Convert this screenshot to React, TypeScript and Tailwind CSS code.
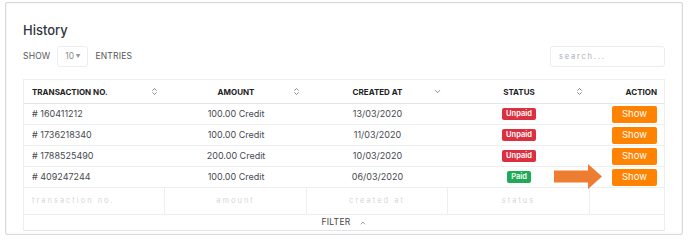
import { ChevronsUpDown, ChevronDown, ChevronUp } from 'lucide-react'

interface Row {
    id: string
    amount: string
    created: string
    paid: boolean
}

const rows: Row[] = [
    { id: '# 160411212', amount: '100.00 Credit', created: '13/03/2020', paid: false },
    { id: '# 1736218340', amount: '100.00 Credit', created: '11/03/2020', paid: false },
    { id: '# 1788525490', amount: '200.00 Credit', created: '10/03/2020', paid: false },
    { id: '# 409247244', amount: '100.00 Credit', created: '06/03/2020', paid: true },
]

const cols = 'grid grid-cols-[141px_142px_141px_142px_75px]'

export default function App() {
    return (
        <div className="w-[688px] h-[240px] bg-white pt-[2px] pl-[5px] font-['Inter',sans-serif]">
            <div className="w-[678px] h-[233px] border border-[#d6d9dd] rounded-[2px] px-[17px] pt-[19px] shadow-[inset_0_0_3px_rgba(0,0,0,0.06)]">
                <h2 className="text-[13px] leading-[17px] font-medium text-[#2f3640]">History</h2>

                <div className="mt-[7px] flex items-center justify-between h-[21px]">
                    <div className="flex items-center text-[8.5px] text-[#555] tracking-[0.2px]">
                        <span>SHOW</span>
                        <div className="ml-[7px] w-[31px] h-[21px] border border-[#ebedf0] rounded-[3px] flex items-center justify-center text-[#8a8d91]">
                            10<span className="text-[5px] ml-[1px] text-[#999]">▼</span>
                        </div>
                        <span className="ml-[7px]">ENTRIES</span>
                    </div>
                    <div className="w-[115px] h-[21px] border border-[#ebedf0] rounded-[3px] flex items-center pl-[8px] text-[7.5px] tracking-[1.8px] text-[#a9adb3]">
                        search...
                    </div>
                </div>

                <div className="relative mt-[12px] border border-[#eceef0] border-b-[#e3e5e8]">
                    <div className={`${cols} h-[24px] border-b border-[#e3e5e8] text-[8px] font-bold text-[#222]`}>
                        <Head label="TRANSACTION NO." align="left" />
                        <Head label="AMOUNT" />
                        <Head label="CREATED AT" down />
                        <Head label="STATUS" />
                        <div className="flex items-center justify-end pr-[8px]">ACTION</div>
                    </div>

                    {rows.map((r) => (
                        <div key={r.id} className={`${cols} h-[21px] border-b border-[#eceef0] text-[9px] text-[#454a50]`}>
                            <div className="flex items-center pl-[8px]">{r.id}</div>
                            <div className="flex items-center justify-center">{r.amount}</div>
                            <div className="flex items-center justify-center">{r.created}</div>
                            <div className="flex items-center justify-center">
                                {r.paid ? (
                                    <span className="h-[12px] px-[4px] rounded-[2px] bg-[#1faa55] text-white text-[7.5px] font-semibold leading-[12px]">Paid</span>
                                ) : (
                                    <span className="h-[12px] px-[4px] rounded-[2px] bg-[#dc3040] text-white text-[7.5px] font-semibold leading-[12px]">Unpaid</span>
                                )}
                            </div>
                            <div className="flex items-center justify-end pr-[8px]">
                                <button className="w-[45px] h-[17px] rounded-[2px] bg-[#ff8200] text-white text-[9.5px]">Show</button>
                            </div>
                        </div>
                    ))}

                    <div className={`${cols} h-[27px] border-b border-[#eceef0] text-[7.5px] tracking-[2px] text-[#d4d6d9]`}>
                        <div className="flex items-center pl-[8px] border-r border-[#eceef0]">transaction no.</div>
                        <div className="flex items-center justify-center border-r border-[#eceef0]">amount</div>
                        <div className="flex items-center justify-center border-r border-[#eceef0]">created at</div>
                        <div className="flex items-center justify-center border-r border-[#eceef0]">status</div>
                        <div />
                    </div>

                    <div className="h-[15px] flex items-center justify-center text-[8.5px] text-[#444] tracking-[0.3px]">
                        FILTER
                        <ChevronUp size={8} strokeWidth={1.8} className="ml-[8px] text-[#666]" />
                    </div>

                    <svg className="absolute left-[530px] top-[84px]" width="49" height="25" viewBox="0 0 49 25">
                        <polygon points="0,6.5 34,6.5 34,0 48,12.5 34,25 34,18.5 0,18.5" fill="#ed7d31" />
                    </svg>
                </div>
            </div>
        </div>
    )
}

function Head({ label, align, down }: { label: string; align?: 'left'; down?: boolean }) {
    return (
        <div className={`relative flex items-center ${align === 'left' ? 'pl-[8px]' : 'justify-center'}`}>
            {label}
            <span className="absolute right-[6px] top-[7px] text-[#555]">
                {down ? <ChevronDown size={9} strokeWidth={1.8} /> : <ChevronsUpDown size={9} strokeWidth={1.8} />}
            </span>
        </div>
    )
}
